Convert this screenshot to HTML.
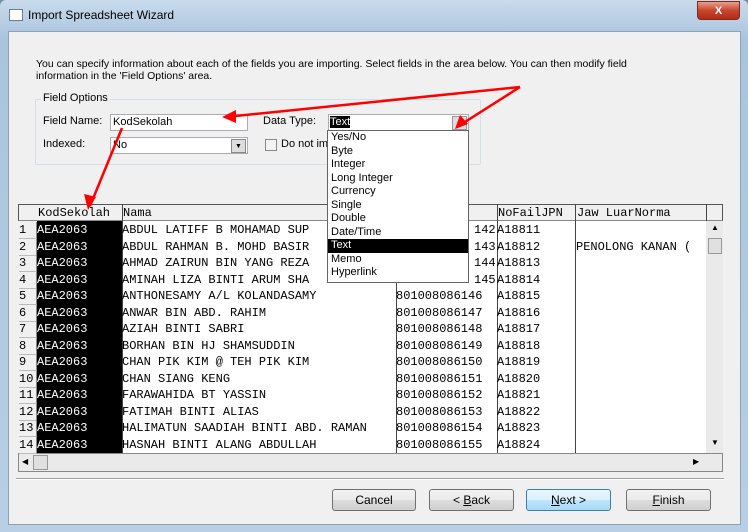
<!DOCTYPE html>
<html><head><style>
*{margin:0;padding:0;box-sizing:border-box}
body{width:748px;height:532px;background:#6f8fae;font-family:"Liberation Sans",sans-serif;font-size:11px;position:relative;overflow:hidden}
.abs{position:absolute}
.frame{left:0;top:0;width:748px;height:532px;background:linear-gradient(#c9dbec,#a9c4de 40px,#b8cfe5);border-radius:6px 6px 0 0}
.client{left:8px;top:31px;width:733px;height:494px;background:#f0f0f0;border:1px solid #8da2b8}
.mono{font-family:"Liberation Mono",monospace;font-size:12px}
.input{background:#fff;border:1px solid #abadb3;height:17px}
.btn{height:22px;border:1px solid #707070;border-radius:3px;background:linear-gradient(#f2f2f2,#ebebeb 50%,#dddddd 51%,#cfcfcf);text-align:center;line-height:20px;font-size:12px}
.cell{position:absolute;height:17px;line-height:17px;white-space:nowrap;overflow:hidden}
</style></head><body>
<div class="abs frame"></div>
<div class="abs" style="left:9px;top:9px;width:14px;height:12px;border:1px solid #6b7c93;background:#fff"></div>
<div class="abs" style="left:28px;top:8px;font-size:12px;color:#000">Import Spreadsheet Wizard</div>
<div class="abs" style="left:697px;top:1px;width:43px;height:19px;border-radius:0 0 4px 4px;background:linear-gradient(#e8a08c,#c7452c 50%,#b62a14);border:1px solid #7c2a1e;color:#fff;text-align:center;font-weight:bold;font-size:11px;line-height:18px">X</div>
<div class="abs client"></div>
<div class="abs" style="left:36px;top:58px;width:620px;font-size:10.5px;line-height:12px">You can specify information about each of the fields you are importing. Select fields in the area below. You can then modify field information in the 'Field Options' area.</div>
<div class="abs" style="left:35px;top:99px;width:446px;height:66px;border:1px solid #d5dfe5;border-radius:2px"></div>
<div class="abs" style="left:41px;top:92px;background:#f0f0f0;padding:0 2px;font-size:11px">Field Options</div>
<div class="abs" style="left:43px;top:115px">Field Name:</div>
<div class="abs input" style="left:110px;top:114px;width:138px;padding-left:2px;line-height:15px">KodSekolah</div>
<div class="abs" style="left:263px;top:115px">Data Type:</div>
<div class="abs input" style="left:328px;top:114px;width:141px;padding-left:1px;line-height:14px"><span style="background:#000;color:#fff">Text</span></div>
<div class="abs" style="left:452px;top:116px;width:15px;height:14px;background:#ddd;border:1px solid #999"></div>
<div class="abs" style="left:43px;top:138px">Indexed:</div>
<div class="abs input" style="left:110px;top:137px;width:138px;padding-left:2px;line-height:15px">No</div>
<div class="abs" style="left:231px;top:139px;width:15px;height:14px;background:#ddd;border:1px solid #888;font-size:7px;text-align:center;line-height:13px">▼</div>
<div class="abs" style="left:265px;top:139px;width:12px;height:12px;border:1px solid #888;background:#f4f4f4"></div>
<div class="abs" style="left:281px;top:138px">Do not imp</div>

<!-- grid -->
<div class="abs" style="left:18px;top:204px;width:705px;height:253px;border:1px solid #555;background:#fff"></div>
<div class="abs" style="left:18px;top:204px;width:705px;height:17px;background:#f0f0f0;border:1px solid #555;border-bottom:1px solid #888"></div>
<div class="abs" style="left:18px;top:221px;width:19px;height:232px;background:#f0f0f0"></div>
<div class="abs" style="left:37px;top:221px;width:85px;height:232px;background:#000"></div>
<div class="abs" style="left:122px;top:204px;width:1px;height:249px;background:#444"></div>
<div class="abs" style="left:396px;top:204px;width:1px;height:249px;background:#444"></div>
<div class="abs" style="left:497px;top:204px;width:1px;height:249px;background:#444"></div>
<div class="abs" style="left:575px;top:204px;width:1px;height:249px;background:#444"></div>
<div class="abs" style="left:706px;top:204px;width:1px;height:249px;background:#444"></div>
<div class="abs" style="left:706px;top:221px;width:17px;height:232px;background:#eaeaea"></div>
<div class="abs" style="left:708px;top:223px;width:14px;height:14px;font-size:8px;text-align:center">▲</div>
<div class="abs" style="left:708px;top:238px;width:14px;height:16px;background:#e0e0e0;border:1px solid #999"></div>
<div class="abs" style="left:708px;top:438px;width:14px;height:14px;font-size:8px;text-align:center">▼</div>
<div class="abs" style="left:18px;top:453px;width:705px;height:19px;background:#eaeaea;border:1px solid #888"></div>
<div class="abs" style="left:22px;top:457px;font-size:8px">◀</div>
<div class="abs" style="left:33px;top:455px;width:15px;height:15px;background:#e0e0e0;border:1px solid #999"></div>
<div class="abs" style="left:693px;top:457px;font-size:8px">▶</div>
<div class="abs" style="left:16px;top:478px;width:708px;height:2px;border-top:1px solid #a0a0a0;border-bottom:1px solid #fff"></div>

<div class="mono">
<div class="cell" style="left:38px;top:205px">KodSekolah</div>
<div class="cell" style="left:123px;top:205px">Nama</div>
<div class="cell" style="left:498px;top:205px">NoFailJPN</div>
<div class="cell" style="left:577px;top:205px">Jaw LuarNorma</div>
<div id="rows"></div>
</div>

<div class="abs" style="left:327px;top:130px;width:142px;height:153px;background:#fff;border:1px solid #646464;font-size:11px;line-height:13.5px">
<div style="padding-left:3px">Yes/No</div><div style="padding-left:3px">Byte</div><div style="padding-left:3px">Integer</div><div style="padding-left:3px">Long Integer</div><div style="padding-left:3px">Currency</div><div style="padding-left:3px">Single</div><div style="padding-left:3px">Double</div><div style="padding-left:3px">Date/Time</div><div style="padding-left:3px;background:#000;color:#fff">Text</div><div style="padding-left:3px">Memo</div><div style="padding-left:3px">Hyperlink</div>
</div>

<div class="abs btn" style="left:332px;top:489px;width:84px">Cancel</div>
<div class="abs btn" style="left:429px;top:489px;width:85px">&lt; <u>B</u>ack</div>
<div class="abs btn" style="left:526px;top:489px;width:85px;border-color:#3c7fb1;background:linear-gradient(#eaf6fd,#d9f0fc 50%,#bee6fd 51%,#a7d9f5)"><u>N</u>ext &gt;</div>
<div class="abs btn" style="left:626px;top:489px;width:85px"><u>F</u>inish</div>

<svg class="abs" style="left:0;top:0" width="748" height="532">
<g stroke="#f00" stroke-width="2.5" fill="none">
<line x1="520" y1="87" x2="226" y2="117"/>
<line x1="520" y1="87" x2="457" y2="127"/>
<line x1="122" y1="128" x2="90" y2="206"/>
</g>
<g fill="#f00">
<polygon points="222,117 236,110 236,123"/>
<polygon points="455,129 460,115 468,124"/>
<polygon points="88,210 84,194 96,197"/>
</g>
</svg>

<script>
var d=[["ABDUL LATIFF B MOHAMAD SUP","","142","A18811",""],["ABDUL RAHMAN B. MOHD BASIR","","143","A18812","PENOLONG KANAN ("],["AHMAD ZAIRUN BIN YANG REZA","","144","A18813",""],["AMINAH LIZA BINTI ARUM SHA","","145","A18814",""],["ANTHONESAMY A/L KOLANDASAMY","801008086146","","A18815",""],["ANWAR BIN ABD. RAHIM","801008086147","","A18816",""],["AZIAH BINTI SABRI","801008086148","","A18817",""],["BORHAN BIN HJ SHAMSUDDIN","801008086149","","A18818",""],["CHAN PIK KIM @ TEH PIK KIM","801008086150","","A18819",""],["CHAN SIANG KENG","801008086151","","A18820",""],["FARAWAHIDA BT YASSIN","801008086152","","A18821",""],["FATIMAH BINTI ALIAS","801008086153","","A18822",""],["HALIMATUN SAADIAH BINTI ABD. RAMAN","801008086154","","A18823",""],["HASNAH BINTI ALANG ABDULLAH","801008086155","","A18824",""]];
var h="";
d.forEach(function(r,i){var t=222+i*16.5;
h+='<div class="cell" style="left:19px;top:'+t+'px;width:18px;border-bottom:1px solid #bbb;border-right:1px solid #888">'+(i+1)+'</div>';
h+='<div class="cell" style="left:37px;top:'+t+'px;color:#fff">AEA2063</div>';
h+='<div class="cell" style="left:122px;top:'+t+'px;width:274px">'+r[0]+'</div>';
if(r[1])h+='<div class="cell" style="left:396px;top:'+t+'px">'+r[1]+'</div>';
if(r[2])h+='<div class="cell" style="left:474px;top:'+t+'px">'+r[2]+'</div>';
h+='<div class="cell" style="left:497px;top:'+t+'px">'+r[3]+'</div>';
if(r[4])h+='<div class="cell" style="left:576px;top:'+t+'px;width:130px">'+r[4]+'</div>';});
document.getElementById("rows").innerHTML=h;
</script>
</body></html>
